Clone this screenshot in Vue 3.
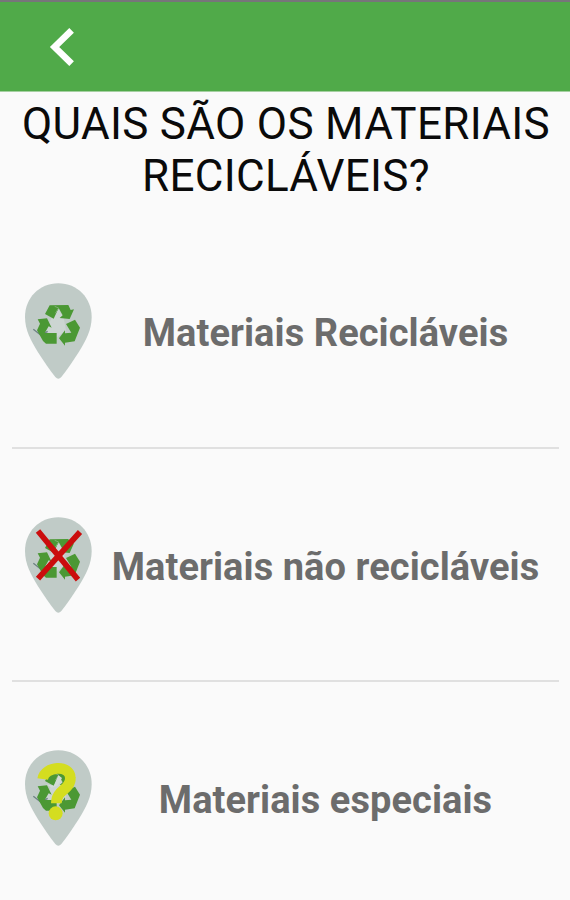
<template>
  <div class="app-screen">
    <header class="top-bar">
      <button type="button" class="back-btn" aria-label="Voltar">
        <svg width="26" height="40" viewBox="0 0 26 40">
          <path d="M22.6 3.4 L5.6 20 L22.6 36.6" fill="none" stroke="#fff" stroke-width="6.6" />
        </svg>
      </button>
    </header>

    <h1>QUAIS SÃO OS MATERIAIS RECICLÁVEIS?</h1>

    <ul class="materials">
      <li v-for="item in materials" :key="item.id" class="material">
        <svg class="pin" viewBox="0 0 300 345">
          <path d="M145 25 C88 25 45 69 45 126 C45 166 63 197 84 232 C102 260 119 285 136 306 Q145 316 154 306 C171 285 188 260 206 232 C227 197 245 166 245 126 C245 69 202 25 145 25 Z" fill="#c0cbc7" />

          <!-- Recycling arrows -->
          <path d="M145 101 L161 129 L168 166 L141 187 L108 170 L123 132 Z" fill="#ccd5d2" />
          <path d="M70 163 L92 180 L113 169 M80 171 L104 184" fill="none" stroke="#6d8283" stroke-width="4" />
          <g fill="#4b9834">
            <path d="M119 91 L175 90 L182 105 L192 103 L179 132 L149 129 L158 121 L146 99 L131 131 L105 117 Z" />
            <path d="M83 133 L111 130 L125 158 L116 154 L104 174 L140 174 L140 206 L108 206 L99 198 L81 166 L90 146 Z" />
            <path d="M168 147 L195 134 L210 158 L194 199 L165 203 L165 212 L147 190 L165 166 L165 175 L184 173 Z" />
          </g>
          <path d="M134 94 L146 99 L136 115" fill="none" stroke="#7fae73" stroke-width="3" />

          <path v-if="item.mark === 'cross'" d="M84 66 L204 212 M210 69 L84 209" fill="none" stroke="#cb0d0d" stroke-width="17" />

          <g v-if="item.mark === 'question'">
            <path d="M145 100 L132 132 L108 126 L125 137 L144 130 L156 108 Z" fill="#d3dcd5" />
            <path d="M98 111 C104 72 181 66 181 108 C182 145 139 141 139 184" fill="none" stroke="#d4dd20" stroke-width="32" />
            <circle cx="137" cy="214" r="21" fill="#d4dd20" />
          </g>
        </svg>
        <span class="label">{{ item.label }}</span>
      </li>
    </ul>
  </div>
</template>

<script setup>
import { ref } from 'vue';

const materials = ref([
  { id: 1, label: 'Materiais Recicláveis', mark: null },
  { id: 2, label: 'Materiais não recicláveis', mark: 'cross' },
  { id: 3, label: 'Materiais especiais', mark: 'question' }
]);
</script>

<style>
body {
  margin: 0;
  background-color: #fafafa;
}
</style>

<style scoped>
.app-screen {
  height: 900px;
  overflow: hidden;
  background-color: #fafafa;
  font-family: Roboto, "Liberation Sans", sans-serif;
}

.top-bar {
  box-sizing: border-box;
  height: 92px;
  border-top: 2px solid #77757a;
  border-bottom: 1px solid #a5d0a1;
  background-color: #50aa49;
  display: flex;
  align-items: center;
  padding-left: 49px;
}

.back-btn {
  display: flex;
  padding: 0;
  border: 0;
  background: none;
}

h1 {
  margin: 6px 0 0;
  padding: 0 5px 0 7px;
  font-size: 44px;
  font-weight: 400;
  line-height: 52px;
  letter-spacing: 0.3px;
  text-align: center;
  color: #0a0a0a;
}

.materials {
  list-style: none;
  margin: 13px 11px 0 12px;
  padding: 0;
}

.material {
  box-sizing: border-box;
  height: 233.5px;
  display: flex;
  align-items: center;
  border-bottom: 2px solid #e0e0e0;
}

.pin {
  flex: none;
  width: 100px;
  height: 115px;
  margin: 4px -18px 0 -2px;
}

.label {
  flex: 1;
  padding-top: 5px;
  font-size: 38px;
  font-weight: 700;
  letter-spacing: 0.07px;
  text-align: center;
  white-space: nowrap;
  color: #6c6c6c;
}
</style>
